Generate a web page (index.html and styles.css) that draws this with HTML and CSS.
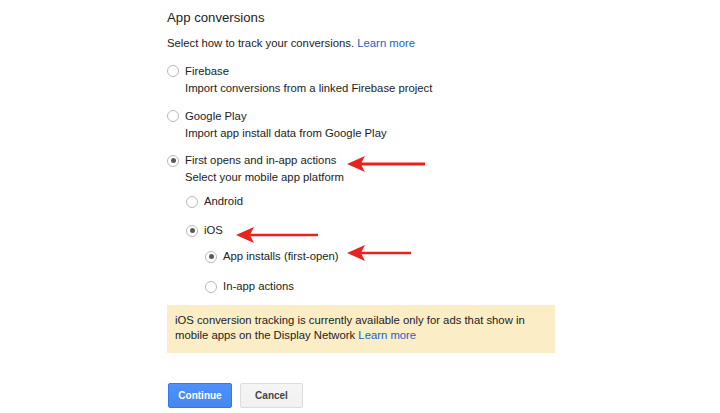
FILE: index.html
```html
<!DOCTYPE html>
<html>
<head>
<meta charset="utf-8">
<link rel="stylesheet" href="styles.css">
</head>
<body>
<div class="page">
  <h1 class="title">App conversions</h1>
  <p class="intro"><span>Select how to track your conversions.</span> <a class="link" href="#">Learn more</a></p>

  <div class="option opt-firebase">
    <div class="row"><span class="radio"></span><span class="label">Firebase</span></div>
    <div class="desc">Import conversions from a linked Firebase project</div>
  </div>

  <div class="option opt-play">
    <div class="row"><span class="radio"></span><span class="label">Google Play</span></div>
    <div class="desc">Import app install data from Google Play</div>
  </div>

  <div class="option opt-first">
    <div class="row"><span class="radio checked"></span><span class="label">First opens and in-app actions</span></div>
    <div class="desc">Select your mobile app platform</div>

    <div class="sub">
      <div class="row sub-android"><span class="radio"></span><span class="label">Android</span></div>
      <div class="row sub-ios"><span class="radio checked"></span><span class="label">iOS</span></div>
      <div class="sub">
        <div class="row sub-installs"><span class="radio checked"></span><span class="label">App installs (first-open)</span></div>
        <div class="row sub-inapp"><span class="radio"></span><span class="label">In-app actions</span></div>
      </div>
    </div>
  </div>

  <div class="notice"><span>iOS conversion tracking is currently available only for ads that show in</span> <span>mobile apps on the Display Network</span> <a class="link" href="#">Learn more</a></div>

  <div class="actions">
    <button class="btn btn-primary">Continue</button>
    <button class="btn btn-secondary">Cancel</button>
  </div>
</div>

<svg class="arrow arrow-1" width="80" height="18" viewBox="0 0 80 18"><path d="M0 9 L18 1 L14.5 7.5 L78 7.5 L78 10.5 L14.5 10.5 L18 17 Z" fill="#e8221f"/></svg>
<svg class="arrow arrow-2" width="84" height="18" viewBox="0 0 84 18"><path d="M0 9 L18 1 L14.5 7.7 L82 7.7 L82 10.3 L14.5 10.3 L18 17 Z" fill="#e8221f"/></svg>
<svg class="arrow arrow-3" width="66" height="18" viewBox="0 0 66 18"><path d="M0 9 L18 1 L14.5 7.7 L64 7.7 L64 10.3 L14.5 10.3 L18 17 Z" fill="#e8221f"/></svg>
</body>
</html>
```

FILE: styles.css
```css
html, body {
  margin: 0;
  padding: 0;
  background: #fff;
}
body {
  font-family: "Liberation Sans", Arial, sans-serif;
  color: #222;
  position: relative;
  width: 720px;
  height: 413px;
  overflow: hidden;
}
.page {
  padding: 8px 0 0 167px;
  font-size: 11.3px;
  line-height: 17px;
}
.title {
  margin: 0;
  font-size: 13.2px;
  line-height: 20px;
  font-weight: normal;
  color: #222;
}
.intro {
  margin: 6.5px 0 0;
}
.link {
  color: #1a5fc8;
  text-decoration: none;
}
.option {
  margin-top: 11px;
}
.opt-first {
  margin-top: 10.5px;
}
.row {
  display: flex;
  align-items: center;
  height: 17px;
}
.radio {
  box-sizing: border-box;
  width: 12px;
  height: 12px;
  border: 1px solid #b9b9b9;
  border-radius: 50%;
  background: #fff;
  margin-right: 6px;
  display: flex;
  align-items: center;
  justify-content: center;
  flex: none;
}
.radio.checked::after {
  content: "";
  width: 5px;
  height: 5px;
  border-radius: 50%;
  background: #5a5a5a;
}
.desc {
  padding-left: 18px;
}
.sub {
  padding-left: 19px;
}
.sub-android { margin-top: 7px; }
.sub-ios { margin-top: 12px; }
.sub-installs { margin-top: 9px; }
.sub-inapp { margin-top: 13px; }
.notice {
  margin-top: 9.5px;
  width: 388px;
  box-sizing: border-box;
  background: #fbeec6;
  padding: 8px 8px 9px;
  line-height: 15.5px;
  height: 48px;
}
.actions {
  margin-top: 30px;
  display: flex;
  gap: 8px;
  padding-left: 1px;
}
.btn {
  box-sizing: border-box;
  height: 25px;
  border-radius: 2px;
  font-family: "Liberation Sans", Arial, sans-serif;
  font-weight: bold;
  font-size: 10px;
  padding: 0;
  cursor: pointer;
}
.btn-primary {
  width: 64px;
  background: linear-gradient(#4d90fe, #4787ed);
  border: 1px solid #3079ed;
  color: #fff;
}
.btn-secondary {
  width: 63px;
  background: linear-gradient(#f5f5f5, #f1f1f1);
  border: 1px solid #dcdcdc;
  color: #444;
}
.arrow {
  position: absolute;
}
.arrow-1 { left: 347px; top: 155px; }
.arrow-2 { left: 236px; top: 226px; }
.arrow-3 { left: 347px; top: 244px; }
```
